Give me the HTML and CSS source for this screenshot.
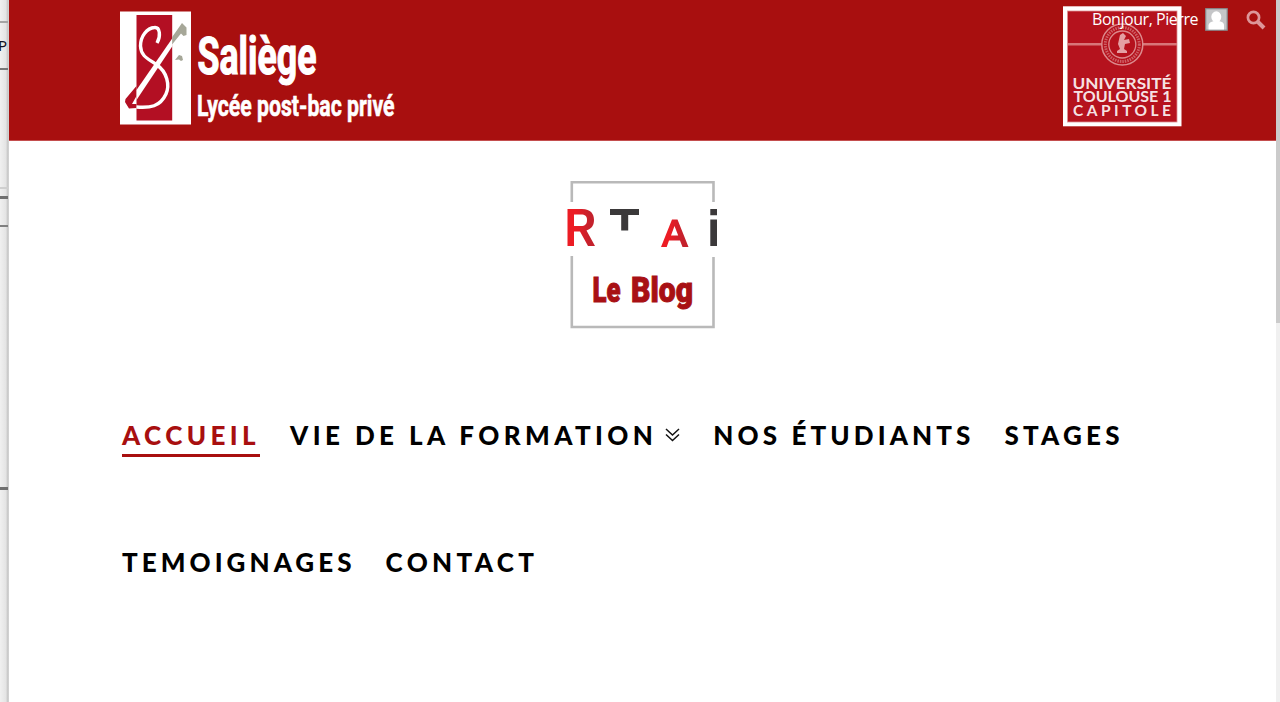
FILE: index.html
```
<!DOCTYPE html>
<html lang="fr">
<head>
<meta charset="utf-8">
<title>RTAI Le Blog</title>
<link rel="stylesheet" href="styles.css">
</head>
<body>
<div class="window">
  <aside class="behind" aria-hidden="true">
    <div class="strip-top"></div>
    <div class="strip-tab"><span>P</span></div>
    <div class="strip-panel"></div>
    <div class="strip-row"></div>
    <div class="strip-panel2"></div>
    <div class="strip-rest"></div>
  </aside>
  <div class="page">
    <header class="banner">
      <svg class="saliege" width="280" height="120" viewBox="0 0 280 120" role="img">
        <rect x="0" y="1.5" width="71" height="113" fill="#fff"/>
        <rect x="16.5" y="5" width="35.7" height="105.500" fill="#b30f23"/>
        <path d="M16.500 76L5.500 89L5 92L9 98.500L16.500 98V94H12L16.500 86Z" fill="#b30f23"/>
        <path d="M37 33C41 26 40 17 34.500 17.500C27 18 20.500 26 20.500 36C21 47 29 49 37 55C47 62 50 75 46 84C40 97 30 98 16.500 97" fill="none" stroke="#fff" stroke-width="3.400" stroke-linejoin="round"/>
        <path d="M16.500 80L52.500 28V36L16.500 90Z" fill="#fff"/>
        <path d="M52.200 34V27L62 13L66.500 17.500V25L63.500 26L61 23.500L52.500 34Z" fill="#a6a798"/>
        <path d="M55 50L59 45L62 46L63 50L61 51L59 49.500Z" fill="#a6a798"/>
        <g class="condensed" fill="#fff" stroke="#fff">
          <text x="77.500" y="63.500" font-size="51" stroke-width="1.200" textLength="119" lengthAdjust="spacingAndGlyphs">Saliège</text>
          <text x="77" y="106" font-size="29.500" stroke-width=".6" textLength="197.500" lengthAdjust="spacingAndGlyphs">Lycée post-bac privé</text>
        </g>
      </svg>
      <svg class="capitole" width="120" height="121" viewBox="0 0 120 121" role="img">
        <rect x="0" y=".3" width="118.500" height="120" fill="#fff"/>
        <rect x="4.500" y="5" width="109.500" height="111" fill="#b5121d" stroke="#df9295" stroke-width=".8"/>
        <path d="M5 38.300H39M80 38.300H114" stroke="#d87679" stroke-width="2.500"/>
        <g fill="none" stroke="#dc898c">
          <circle cx="59.300" cy="38.500" r="20.500" stroke-width="1.500"/>
          <circle cx="59.300" cy="38.500" r="17" stroke-width="3" stroke-dasharray="1.500 1" opacity=".65"/>
          <circle cx="59.300" cy="38.500" r="13.500" stroke-width="1.300"/>
        </g>
        <path d="M57 29L60 27L63 30L61 34L66 33L67 37L62 38L61 43L64 45V47H54V45L57 43L55 38Z" fill="#e4a0a3"/>
        <g class="sans" fill="#fff" fill-opacity=".9">
          <text x="9.500" y="82.500" font-size="15.500" textLength="99" lengthAdjust="spacingAndGlyphs">UNIVERSITÉ</text>
          <text x="10.500" y="96" font-size="15.500" textLength="98" lengthAdjust="spacingAndGlyphs">TOULOUSE 1</text>
          <text x="10" y="109.500" font-size="15.500" textLength="98">CAPITOLE</text>
        </g>
      </svg>
      <div class="account">
        <span class="greeting">Bonjour, Pierre</span>
        <svg class="avatar" width="23" height="23" viewBox="0 0 23 23"><rect x=".7" y=".7" width="21.500" height="21.500" fill="#c5c6c8" stroke="#86898c" stroke-width="1.200"/><ellipse cx="11.300" cy="8.800" rx="5" ry="5.500" fill="#fff"/><path d="M3.500 21.500V17Q4 14 9 13H14Q19 14 19 17V21.500Z" fill="#fff"/></svg>
        <svg class="search" width="20" height="20" viewBox="0 0 20 20" fill="none" stroke="#dd9699"><circle cx="7.500" cy="7.500" r="5.600" stroke-width="2.700"/><path d="M12 12L18 18" stroke-width="4"/></svg>
      </div>
    </header>
    <main class="content">
      <svg class="blog-logo" width="160" height="150" viewBox="0 0 160 150" role="img">
        <defs><linearGradient id="red" x1="0" x2="1"><stop offset=".3" stop-color="#ec1c24"/><stop offset=".8" stop-color="#c4212c"/></linearGradient></defs>
        <path d="M6.800 22V2.300H148.500V22M6.800 76V147H148.500V77" fill="none" stroke="#b9b9b9" stroke-width="2.600"/>
        <path fill="url(#red)" fill-rule="evenodd" d="M2.500 29H17C26 29 29 34 29 40C29 46 26 49 21.500 50.500L30 66H23L15 51.500H9V66H2.500ZM9 34.500V46H16C20 46 22 44 22 40C22 36 20 34.500 16 34.500Z"/>
        <path fill="#3b393a" d="M45 29H74V35H63.200V50.500H56.200V35H45ZM145.300 29H152V35.300H145.300ZM145.300 39.500H152V66H145.300Z"/>
        <path fill="url(#red)" fill-rule="evenodd" d="M107 39.500H112.500L123.500 67H117.500L115 60.500H104L101.700 67H96ZM109.500 46L106 55.500H113.200Z"/>
        <g class="heavy" fill="#a81014" stroke="#a81014" stroke-width="1">
          <text x="27.500" y="122" font-size="35" textLength="28" lengthAdjust="spacingAndGlyphs">Le</text>
          <text x="66" y="122" font-size="35" textLength="62" lengthAdjust="spacingAndGlyphs">Blog</text>
        </g>
      </svg>
      <nav class="menu">
        <a class="item current">ACCUEIL</a>
        <a class="item parent">VIE DE LA FORMATION<svg class="chevrons" width="16" height="14" viewBox="0 0 16 14" fill="none" stroke="#111" stroke-width="1.500"><path d="M1 1L7.500 7L14 1M1 6.500L7.500 12.500L14 6.500"/></svg></a>
        <a class="item students">NOS ÉTUDIANTS</a>
        <a class="item stages">STAGES</a>
        <a class="item testimonials">TEMOIGNAGES</a>
        <a class="item contact">CONTACT</a>
      </nav>
    </main>
  </div>
  <div class="scrollbar"><div class="thumb"></div></div>
</div>
</body>
</html>
```
FILE: styles.css
```
* { box-sizing: border-box; }
body { margin: 0; overflow: hidden; background: #fff; }
.window { display: flex; width: 1280px; height: 702px; }

.behind {
  display: flex;
  flex-direction: column;
  width: 9px;
  background: linear-gradient(to right, #f0f0f0 0, #e4e4e4 65%, #c8c8c8 85%, #d6d6d6);
}
.behind > div { width: 7.500px; flex: none; }
.strip-top { height: 23px; border-bottom: 2px solid #a5a5a5; }
.strip-tab { height: 47px; border-bottom: 2px solid #777; font: 15px/44px "Noto Sans", sans-serif; color: #112; }
.strip-tab span { margin-left: -2px; }
.strip-panel { height: 119px; border-bottom: 2px solid #cfcfcf; }
.strip-row { height: 10px; border-bottom: 3px solid #707070; }
.strip-panel2 { height: 28px; border-bottom: 2px solid #808080; }
.strip-rest { height: 263px; border-bottom: 3px solid #707070; }

.page { width: 1267px; flex: none; background: #fff; }
.banner {
  position: relative;
  display: flex;
  justify-content: space-between;
  height: 141px;
  padding: 6px 93px 0 111px;
  background: #a80f0f;
  border-bottom: 1px solid #c44e4e;
}
.saliege { margin-top: 4px; }
.condensed { font-family: Roboto, sans-serif; font-weight: 700; }
.sans { font-family: Lato, sans-serif; font-weight: 700; }
.account {
  position: absolute;
  top: 8px;
  right: 10px;
  display: flex;
  align-items: center;
  color: #fff;
  font: 16px/23px "Open Sans", sans-serif;
}
.greeting { width: 113px; letter-spacing: -.45px; white-space: nowrap; }
.search { margin-left: 18px; }

.content { display: flex; flex-direction: column; }
.blog-logo { margin: 39px 0 0 556px; }
.heavy { font-family: Roboto, sans-serif; font-weight: 900; }
.menu {
  display: flex;
  flex-wrap: wrap;
  column-gap: 30px;
  width: 1050px;
  margin: 41px 0 0 113px;
}
.item {
  display: flex;
  align-items: center;
  height: 127px;
  color: #000;
  font: 900 26px/38px Lato, sans-serif;
  letter-spacing: 4.400px;
  white-space: nowrap;
}
.students { letter-spacing: 4.100px; }
.stages { letter-spacing: 4.250px; }
.testimonials { letter-spacing: 4.050px; }
.contact { letter-spacing: 4.350px; }
.current { color: #a80f0f; position: relative; }
.current::after {
  content: "";
  position: absolute;
  left: 0;
  right: 0;
  top: 83px;
  height: 2.500px;
  background: #a80f0f;
}
.chevrons { margin: 0 2px 0 8px; }

.scrollbar { width: 4px; flex: none; background: #f0f0f0; }
.thumb { height: 323px; background: #cbcbcb; }
```
